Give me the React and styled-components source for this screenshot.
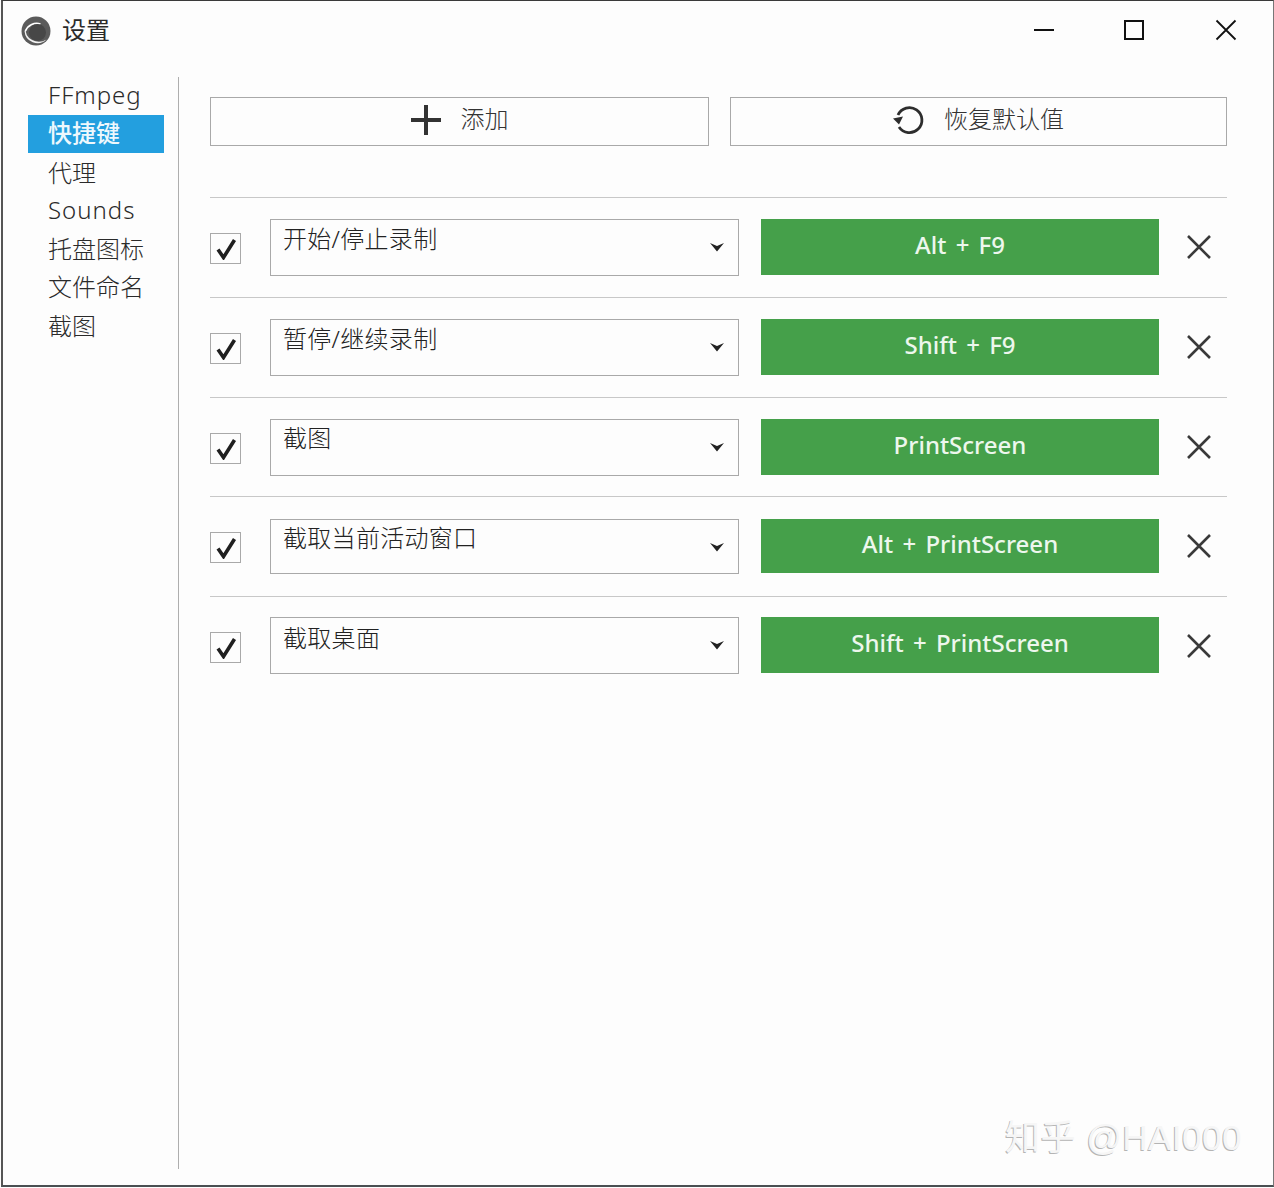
import React from "react";
import styled, { createGlobalStyle } from "styled-components";

const Global = createGlobalStyle`
  html, body { margin: 0; padding: 0; background: #fdfdfd; }
  * { box-sizing: border-box; }
  #root { width: 1274px; height: 1188px; }
`;

const FONT = `"Noto Sans", "Noto Sans CJK SC", sans-serif`;

const Window = styled.div`
  position: relative;
  width: 1273px;
  height: 1187px;
  margin-left: 1px;
  border-top: 1px solid #3a3a3a;
  border-left: 2px solid #555;
  border-right: 1px solid #777;
  border-bottom: 2px solid #4a4f52;
  background: #fdfdfd;
  color: #222;
  font-family: ${FONT};
  display: flex;
  flex-direction: column;
  overflow: hidden;
`;

const TitleBar = styled.header`
  height: 76px;
  flex: none;
  display: flex;
  align-items: flex-start;
  padding: 15px 0 0 18px;
`;

const Logo = styled.svg`
  width: 30px;
  height: 30px;
  flex: none;
`;

const Title = styled.h1`
  margin: -1px 0 0 11px;
  font-size: 24px;
  line-height: 30px;
  font-weight: 400;
  color: #2a2a2a;
`;

const WindowControls = styled.div`
  margin-left: auto;
  display: flex;
  align-items: center;
  height: 28px;
  gap: 67px;
  padding-right: 35px;
`;

const ControlIcon = styled.svg`
  width: 24px;
  height: 24px;
  display: block;
  flex: none;
`;

const Body = styled.div`
  flex: 1;
  display: flex;
  min-height: 0;
  padding-bottom: 16px;
`;

const Sidebar = styled.nav`
  width: 176px;
  flex: none;
  border-right: 1px solid #aeaeae;
  padding: 0 14px 0 25px;
  display: flex;
  flex-direction: column;
`;

const NavItem = styled.div`
  height: ${(p) => p.$h || 38}px;
  display: flex;
  align-items: center;
  padding: 0 0 ${(p) => p.$pb ?? 2}px 20px;
  font-size: 24px;
  letter-spacing: ${(p) => (p.$latin ? "1px" : "0")};
  font-weight: ${(p) => (p.$active ? 500 : 300)};
  white-space: nowrap;
  color: ${(p) => (p.$active ? "#eef8fd" : "#2a2a2a")};
  background: ${(p) => (p.$active ? "#239fdf" : "transparent")};
`;

const Content = styled.main`
  flex: 1;
  min-width: 0;
  padding: 20px 46px 0 31px;
  display: flex;
  flex-direction: column;
`;

const Actions = styled.div`
  display: grid;
  grid-template-columns: 499px 497px;
  gap: 21px;
  margin-bottom: 51px;
`;

const ActionButton = styled.button`
  height: 49px;
  border: 1px solid #a9a9a9;
  background: #fdfdfd;
  display: flex;
  align-items: center;
  justify-content: center;
  gap: ${(p) => p.$gap}px;
  padding: 0 2px 9px 0;
  font-family: ${FONT};
  font-size: 24px;
  font-weight: 300;
  color: #333;
`;

const ActionIcon = styled.svg`
  width: 34px;
  height: 34px;
  flex: none;
  position: relative;
  top: 4px;
  margin-top: -3px;
`;

const Row = styled.section`
  height: ${(p) => p.$h || 100}px;
  border-top: 1px solid #c8c8c8;
  padding-top: ${(p) => p.$pad || 21}px;
  display: flex;
  align-items: flex-start;
`;

const CheckBox = styled.div`
  width: 31px;
  height: 31px;
  margin-top: ${(p) => p.$top || 14}px;
  margin-right: 29px;
  flex: none;
  border: 1px solid #a9a9a9;
  display: flex;
  align-items: center;
  justify-content: center;
`;

const Select = styled.div`
  position: relative;
  width: 469px;
  height: ${(p) => p.$h || 57}px;
  flex: none;
  border: 1px solid #a9a9a9;
  padding: ${(p) => p.$textTop ?? 1}px 0 0 12px;
  font-size: 24px;
  line-height: 36px;
  letter-spacing: 0.3px;
  font-weight: 300;
  color: #222;
`;

const Caret = styled.svg`
  position: absolute;
  right: 14px;
  top: 22px;
  width: 14px;
  height: 10px;
`;

const KeyButton = styled.button`
  width: 398px;
  height: ${(p) => p.$h || 56}px;
  margin-left: 22px;
  flex: none;
  border: none;
  padding: 0 0 5px;
  background: #45a04a;
  color: #edf7ed;
  font-family: ${FONT};
  font-size: 24px;
  font-weight: 500;
  word-spacing: 3px;
`;

const RemoveIcon = styled.svg`
  width: 26px;
  height: 26px;
  margin-left: 27px;
  margin-top: ${(p) => p.$top || 15}px;
  flex: none;
`;

const Watermark = styled.div`
  position: absolute;
  right: 31px;
  bottom: 25px;
  font-family: "Liberation Sans", "Noto Sans CJK SC", sans-serif;
  font-size: 35px;
  line-height: 44px;
  letter-spacing: 0.5px;
  color: #f6f6f6;
  text-shadow: -1px 1px 0 #b4b4b4;
  white-space: nowrap;
`;

const nav = [
  { t: "FFmpeg", latin: true, pb: 3 },
  { t: "快捷键", active: true, pb: 6 },
  { t: "代理" },
  { t: "Sounds", latin: true, pb: 1 },
  { t: "托盘图标" },
  { t: "文件命名" },
  { t: "截图", h: 41 },
];

const rows = [
  { name: "开始/停止录制", key: "Alt + F9" },
  { name: "暂停/继续录制", key: "Shift + F9" },
  { name: "截图", key: "PrintScreen", h: 99, textTop: 0 },
  { name: "截取当前活动窗口", key: "Alt + PrintScreen", sel: 55, btn: 54, pad: 22, top: 13, xTop: 14, textTop: 0 },
  { name: "截取桌面", key: "Shift + PrintScreen", pad: 20, top: 15, xTop: 16, textTop: 2 },
];

export default function App() {
  return (
    <>
      <Global />
      <Window>
        <TitleBar>
          <Logo viewBox="0 0 30 30">
            <circle cx="15" cy="15" r="14.5" fill="#5b5b5b" />
            <path d="M3.5 15a13 13 0 0 0 22 8.5A13 11 0 0 1 5 13z" fill="#f2f2f2" />
            <path d="M4.5 15a12 12 0 0 1 15-7" fill="none" stroke="#fff" strokeWidth="1.6" />
            <circle cx="16.5" cy="16.5" r="8.5" fill="#474747" />
          </Logo>
          <Title>设置</Title>
          <WindowControls>
            <ControlIcon viewBox="0 0 24 24">
              <path d="M2 12h20" stroke="#111" strokeWidth="2" />
            </ControlIcon>
            <ControlIcon viewBox="0 0 24 24">
              <rect x="2" y="3" width="18" height="18" fill="none" stroke="#111" strokeWidth="2" />
            </ControlIcon>
            <ControlIcon viewBox="0 0 24 24">
              <path d="M2.5 2.5l19 19M21.5 2.5l-19 19" stroke="#111" strokeWidth="1.8" />
            </ControlIcon>
          </WindowControls>
        </TitleBar>
        <Body>
          <Sidebar>
            {nav.map((n) => (
              <NavItem key={n.t} $active={n.active} $latin={n.latin} $h={n.h} $pb={n.pb}>
                {n.t}
              </NavItem>
            ))}
          </Sidebar>
          <Content>
            <Actions>
              <ActionButton $gap={18}>
                <ActionIcon viewBox="0 0 34 34">
                  <path d="M17 2v30M2 17h30" stroke="#333" strokeWidth="4" />
                </ActionIcon>
                添加
              </ActionButton>
              <ActionButton $gap={19}>
                <ActionIcon viewBox="0 0 34 34">
                  <path d="M7 12a12.5 12.5 0 1 1 1 12" fill="none" stroke="#2d2d2d" strokeWidth="2.8" />
                  <path d="M2 15.5l10-2-4 8z" fill="#2d2d2d" />
                </ActionIcon>
                恢复默认值
              </ActionButton>
            </Actions>
            {rows.map((r) => (
              <Row key={r.name} $h={r.h} $pad={r.pad}>
                <CheckBox $top={r.top}>
                  <svg width="22" height="22" viewBox="0 0 22 22">
                    <path d="M3 11.5l5.5 8L19.5 2" fill="none" stroke="#1f1f1f" strokeWidth="3.6" />
                  </svg>
                </CheckBox>
                <Select $h={r.sel} $textTop={r.textTop}>
                  {r.name}
                  <Caret viewBox="0 0 14 10">
                    <path d="M0 1l7 3 7-3-7 8.5z" fill="#222" />
                  </Caret>
                </Select>
                <KeyButton $h={r.btn}>{r.key}</KeyButton>
                <RemoveIcon viewBox="0 0 26 26" $top={r.xTop}>
                  <path d="M2 2l22 22M24 2L2 24" stroke="#3a3a3a" strokeWidth="2.6" />
                </RemoveIcon>
              </Row>
            ))}
          </Content>
        </Body>
        <Watermark>知乎 @HAI000</Watermark>
      </Window>
    </>
  );
}
